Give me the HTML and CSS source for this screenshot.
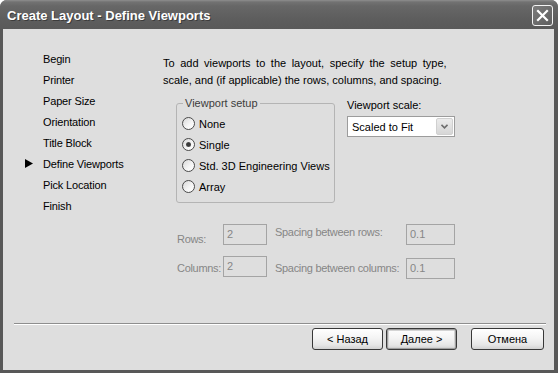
FILE: index.html
```html
<!DOCTYPE html>
<html lang="en">
<head>
  <meta charset="UTF-8">
  <title>Create Layout - Define Viewports</title>
  <link rel="stylesheet" href="styles.css">
</head>
<body>
  <div class="window">
    <div class="titlebar">
      <span class="title">Create Layout - Define Viewports</span>
      <span class="close">
        <svg width="13" height="13" viewBox="0 0 13 13"><path d="M2 2 L11 11 M11 2 L2 11" stroke="#fff" stroke-width="2.2" stroke-linecap="square"/></svg>
      </span>
    </div>

    <div class="client">
      <div class="main">
        <ul class="steps">
          <li><span class="mark"></span>Begin</li>
          <li><span class="mark"></span>Printer</li>
          <li><span class="mark"></span>Paper Size</li>
          <li><span class="mark"></span>Orientation</li>
          <li><span class="mark"></span>Title Block</li>
          <li><span class="mark"><svg width="8" height="9" viewBox="0 0 8 9"><polygon points="0,0 8,4.5 0,9" fill="#000"/></svg></span>Define Viewports</li>
          <li><span class="mark"></span>Pick Location</li>
          <li><span class="mark"></span>Finish</li>
        </ul>

        <div class="page">
          <p class="intro"><span class="wide">To add viewports to the layout, specify the setup type,</span><br>scale, and (if applicable) the rows, columns, and spacing.</p>

          <div class="setup">
            <fieldset class="group">
              <legend>Viewport setup</legend>
              <div class="radio"><span class="dot"></span>None</div>
              <div class="radio"><span class="dot checked"></span>Single</div>
              <div class="radio"><span class="dot"></span>Std. 3D Engineering Views</div>
              <div class="radio"><span class="dot"></span>Array</div>
            </fieldset>

            <div class="scale">
              <div class="scale-label">Viewport scale:</div>
              <div class="combo">
                <span>Scaled to Fit</span>
                <span class="drop"><svg width="7" height="5" viewBox="0 0 7 5"><path d="M0.5 0.8 L3.5 3.8 L6.5 0.8" fill="none" stroke="#6e6e6e" stroke-width="1.6"/></svg></span>
              </div>
            </div>
          </div>

          <div class="array">
            <span class="lbl lbl-rows">Rows:</span>
            <span class="field">2</span>
            <span class="lbl lbl-top">Spacing between rows:</span>
            <span class="field">0.1</span>
            <span class="lbl lbl-mid">Columns:</span>
            <span class="field">2</span>
            <span class="lbl lbl-mid">Spacing between columns:</span>
            <span class="field field-low">0.1</span>
          </div>
        </div>
      </div>

      <div class="separator"></div>

      <div class="buttons">
        <span class="btn">&lt; Назад</span>
        <span class="btn btn-default">Далее &gt;</span>
        <span class="btn btn-cancel">Отмена</span>
      </div>
    </div>
  </div>
</body>
</html>
```

FILE: styles.css
```css
* {
  box-sizing: border-box;
}

body {
  margin: 0;
  background: #fff;
  font-family: "Liberation Sans", Arial, sans-serif;
  font-size: 11px;
  color: #000;
}

.window {
  width: 558px;
  height: 373px;
  display: flex;
  flex-direction: column;
  background: #585858;
  border-radius: 7px 7px 0 0;
  overflow: hidden;
}

/* Title bar */
.titlebar {
  height: 29px;
  flex: none;
  display: flex;
  align-items: center;
  justify-content: space-between;
  padding: 2px 5px 0 7px;
  background: linear-gradient(#8e8e8e 0, #727272 2px, #676767 6px, #5e5e5e 18px, #595959 29px);
}

.title {
  color: #fff;
  font-weight: bold;
  font-size: 13px;
  text-shadow: 1px 1px 0 #3c3c3c;
}

.close {
  width: 21px;
  height: 21px;
  display: flex;
  align-items: center;
  justify-content: center;
  border: 1px solid #f4f4f4;
  border-radius: 3px;
  background: linear-gradient(135deg, #7c7c7c, #5e5e5e);
}

/* Client area */
.client {
  flex: 1;
  display: flex;
  flex-direction: column;
  margin: 0 4px 3px 3px;
  background: #dedede;
}

.main {
  flex: 1;
  display: flex;
}

.steps {
  flex: none;
  width: 160px;
  margin: 0;
  padding: 19px 0 0 22px;
  list-style: none;
}

.steps li {
  height: 21px;
  display: flex;
  align-items: center;
  letter-spacing: -0.15px;
}

.steps .mark {
  width: 18px;
  display: flex;
  align-items: center;
}

.page {
  flex: 1;
  padding-top: 26px;
}

.intro {
  margin: 0;
  line-height: 17px;
  white-space: nowrap;
}

.intro .wide {
  word-spacing: 2.5px;
}

.setup {
  display: flex;
  align-items: flex-start;
  gap: 12px;
  margin: 7px 0 0 13px;
}

.group {
  width: 159px;
  margin: 0;
  padding: 3px 0 5px 5px;
  border: 1px solid #b4b4b4;
  border-radius: 3px;
}

.group legend {
  margin-left: 1px;
  padding: 0 2px;
  line-height: 14px;
  color: #3c3c3c;
}

.radio {
  height: 21px;
  display: flex;
  align-items: center;
  gap: 4px;
  white-space: nowrap;
}

.dot {
  width: 13px;
  height: 13px;
  flex: none;
  display: flex;
  align-items: center;
  justify-content: center;
  border: 1px solid #4a4a4a;
  border-radius: 50%;
  background: linear-gradient(135deg, #d8d8d8, #f6f6f6 60%, #fff);
}

.dot.checked::after {
  content: '';
  width: 5px;
  height: 5px;
  border-radius: 50%;
  background: radial-gradient(circle, #3a3a3a 40%, #707070 100%);
}

.scale-label {
  margin-top: 2px;
  line-height: 14px;
}

.combo {
  width: 108px;
  height: 21px;
  margin-top: 4px;
  display: flex;
  align-items: center;
  justify-content: space-between;
  padding: 1px 1px 1px 4px;
  border: 1px solid #9c9c9c;
  background: #fff;
}

.drop {
  width: 17px;
  height: 17px;
  display: flex;
  align-items: center;
  justify-content: center;
  border: 1px solid #d0d0d0;
  border-radius: 2px;
  background: linear-gradient(#ececec, #d6d6d6);
}

/* Array spacing (disabled) */
.array {
  display: grid;
  grid-template-columns: 46px 44px 139px 49px;
  grid-template-rows: 21px 21px;
  row-gap: 11px;
  margin: 21px 0 0 14px;
  color: #868686;
}

.lbl {
  line-height: 14px;
  white-space: nowrap;
  letter-spacing: -0.3px;
}

.array .lbl:nth-child(3),
.array .lbl:nth-child(7) {
  padding-left: 8px;
}

.lbl-rows {
  align-self: end;
  margin-bottom: -1px;
}

.lbl-top {
  align-self: start;
  padding-top: 1px;
}

.lbl-mid {
  align-self: center;
  margin-top: 2px;
}

.field {
  height: 21px;
  padding-left: 3px;
  line-height: 19px;
  border: 1px solid #a4a4a4;
}

.field-low {
  margin-top: 2px;
}

/* Footer */
.separator {
  height: 2px;
  margin: 0 8px 0 11px;
  border-top: 1px solid #8e8e8e;
  border-bottom: 1px solid #fff;
}

.buttons {
  display: flex;
  justify-content: flex-end;
  gap: 3px;
  padding: 3px 10px 20px 0;
}

.btn {
  width: 71px;
  height: 22px;
  display: flex;
  align-items: center;
  justify-content: center;
  border: 1px solid #383838;
  border-radius: 3px;
  background: linear-gradient(#ffffff, #f4f4f4 45%, #e6e6e6 80%, #d2d2d2);
}

.btn-default {
  box-shadow: inset 0 0 0 1px #9e9e9e, inset 0 0 0 2px #d4d4d4;
}

.btn-cancel {
  width: 73px;
  margin-left: 11px;
}
```
